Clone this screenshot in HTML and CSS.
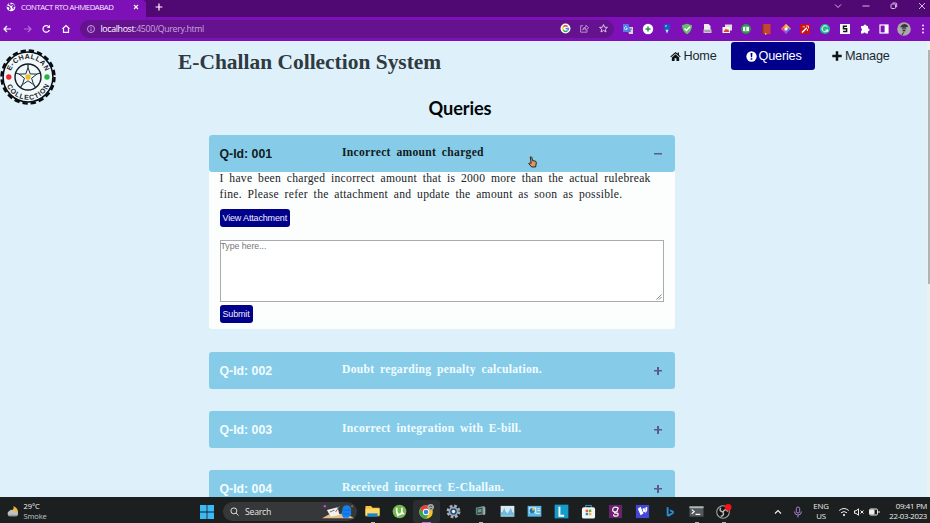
FILE: index.html
```
<!DOCTYPE html>
<html lang="en">
<head>
<meta charset="utf-8">
<title>CONTACT RTO AHMEDABAD</title>
<link rel="stylesheet" href="styles.css">
</head>
<body>
<div class="screen">
  <div class="tabs">
    <div class="tab">
      <svg class="globe" viewBox="0 0 12 12"><circle cx="6" cy="6" r="5.2" fill="#fff"/><path d="M1 5l3 1 1 2-1 2M5 1l-1 2 2 1 2-1 2 2-2 1 1 2" fill="none" stroke="#7812b4" stroke-width="1.5"/></svg>
      <span class="tab-title">CONTACT RTO AHMEDABAD</span>
      <svg class="tab-x" viewBox="0 0 6 6"><path d="M1 1l4 4M5 1L1 5" stroke="#fff" stroke-width="1.1"/></svg>
    </div>
    <svg class="tab-new" viewBox="0 0 8 8"><path d="M4 .6v6.800M.6 4h6.800" stroke="#fff" stroke-width="1.2"/></svg>
    <svg class="win" viewBox="0 0 100 12" fill="none" stroke="#d5bce0" stroke-width="1"><path d="M5 4.500l3 3 3-3M32.500 6h7M89 3l6 6M95 3l-6 6"/><rect x="61" y="4" width="4.500" height="4.500" rx="1"/><path d="M62.500 3h3.200q1 0 1 1v3.300"/></svg>
  </div>

  <div class="toolbar">
    <svg class="nav" viewBox="0 0 78 12" fill="none" stroke="#fff" stroke-width="1.2"><path d="M11 6H4M7 3L4 6l3 3"/><path d="M24 6h7M28 3l3 3-3 3" stroke="#b271d3"/><path d="M49 4A3.300 3.300 0 1 0 49.400 7"/><path d="M50 1.800v3.200h-3.200z" fill="#fff" stroke="none"/><path d="M62.500 5.700L66 2.600l3.500 3.100M63.500 5v4.400h5V5"/></svg>
    <div class="address">
      <svg class="info" viewBox="0 0 10 10" fill="none" stroke="#c9a2dd"><circle cx="5" cy="5" r="3.500"/><path d="M5 4.500V7M5 2.800v1"/></svg>
      <span class="url"><b>localhost</b>:4500/Qurery.html</span>
      <span class="address-icons">
        <svg viewBox="0 0 12 12"><circle cx="6" cy="6" r="5.400" fill="#fff"/><g fill="none" stroke-width="1.500"><path d="M3.700 4.100A3.200 3.200 0 0 1 8.300 3.800" stroke="#ea4335"/><path d="M3.700 4.100a3.300 3.300 0 0 0 0 3.800" stroke="#fbbc05"/><path d="M3.700 7.900a3.200 3.200 0 0 0 4.500.4" stroke="#34a853"/><path d="M8.200 8.300A3 3 0 0 0 9.200 6H6" stroke="#4285f4"/></g></svg>
        <svg viewBox="0 0 12 12" fill="none" stroke="#c49bd8"><path d="M4.500 3H1.800v7h7V8M4 7.500Q4.500 4.500 7.500 4.500V2.500L10.500 5.200 7.500 8V6.200Q5 6 4 7.500z"/></svg>
        <svg viewBox="0 0 12 12" fill="none" stroke="#e5cfee"><path d="M6 1.700l1.200 2.900 3.100.2-2.400 2 .8 3L6 8.200 3.300 9.800l.8-3-2.400-2 3.100-.2z"/></svg>
      </span>
    </div>
    <div class="extensions">
      <svg viewBox="0 0 12 12"><path d="M5 4h6v7H7z" fill="#d8d8dc"/><path d="M1 1h5.500l2 8H1z" fill="#4b82ea"/><path d="M4.800 4A1.500 1.500 0 1 0 5.300 5.500H4" fill="none" stroke="#fff" stroke-width=".8"/><path d="M7.500 6H10M9 5.500L8 9" stroke="#687080" stroke-width=".8"/></svg>
      <svg viewBox="0 0 12 12"><circle cx="6" cy="6" r="5.200" fill="#fff"/><path d="M6 3.500v5M3.500 6h5" stroke="#269653" stroke-width="1.500"/></svg>
      <svg viewBox="0 0 12 12"><path d="M2.500 3.500A3.500 2.700 0 0 1 9.500 3.500Q9.500 5.500 6 10.500 2.500 5.500 2.500 3.500z" fill="#175ac0"/><circle cx="5" cy="3" r="1.100" fill="#75b5f6"/><path d="M4.500 6.800h3L6 10.500z" fill="#d6e3f3"/></svg>
      <svg viewBox="0 0 12 12"><path d="M6 .7l5 1.600q0 6-5 9-5-3-5-9z" fill="#65c067"/><path d="M3.500 5.500L5.500 7.500 9 3.800" fill="none" stroke="#fff" stroke-width="1.500"/></svg>
      <svg viewBox="0 0 12 12"><path d="M3 1h4.500l2 2v7H3z" fill="#eee"/><path d="M2.500 6.500h8V10h-8z" fill="#cbc5d1"/><path d="M3.500 8h6" stroke="#857c8b"/></svg>
      <svg viewBox="0 0 12 12"><path d="M4 1.500h7v6H4z" fill="#ddd"/><path d="M1.500 4h7.500v6H1.500z" fill="#f8f5ee"/><path d="M3 8l2-2.500L6 7l1-1 1.500 3H2.500z" fill="#d24b38"/></svg>
      <svg viewBox="0 0 12 12"><circle cx="6" cy="6" r="5" fill="#2d9a48"/><rect x="3" y="3.800" width="6" height="4.400" rx=".7" fill="#fff"/><path d="M5.800 4v4" stroke="#2d9a48"/></svg>
      <svg viewBox="0 0 12 12"><path d="M2 1h8.500v10H2z" fill="#c64532"/><path d="M2 1h1.500v10H2z" fill="#853028"/><path d="M5 10h1.500v1.800H5z" fill="#e5b84f"/></svg>
      <svg viewBox="0 0 12 12"><path d="M6 .8L1 5.800l2 2L6 4.500z" fill="#f68a45"/><path d="M6 .8l5 5L8.500 8 5 4z" fill="#f2c14b"/><path d="M1 5.800L6 11l1-3-3-3z" fill="#e5418e"/><path d="M11 5.800L6 11 5 8l3.500-3z" fill="#5275e8"/><circle cx="6" cy="6" r="1.600" fill="#fff"/></svg>
      <svg viewBox="0 0 12 12"><path d="M1 1h10v10H1z" fill="#cb1118"/><path d="M3 9.500L7.800 4.700" stroke="#fff" stroke-width="1.600"/><path d="M3.500 3.800H6M8.500 6v2M7 3h2.500v2.500" fill="none" stroke="#fff" stroke-width=".8"/></svg>
      <svg viewBox="0 0 12 12"><circle cx="6" cy="6" r="5" fill="#20ba91"/><path d="M8.500 4A3 3 0 1 0 8.800 7H6.500M8.800 6.800v2" fill="none" stroke="#fff"/></svg>
      <svg viewBox="0 0 12 12"><path d="M1 1h10v10H1z" fill="#fff"/><path d="M8 3.300H4.500V5.800H7.600V8.600H4" fill="none" stroke="#151515" stroke-width="1.500"/></svg>
      <svg viewBox="0 0 12 12"><path d="M2 3h2.500a1.500 1.500 0 1 1 3 0H9v2.200a1.500 1.500 0 1 1 0 3V10.500H6.800a1.400 1.400 0 0 0-2.600 0H2V8a1.400 1.400 0 0 0 0-2.700z" fill="#fff"/></svg>
      <svg viewBox="0 0 12 12"><rect x="2" y="2" width="8" height="8" fill="none" stroke="#fff" stroke-width="1.200"/><path d="M6.600 2H10v8H6.600z" fill="#fff"/></svg>
      <svg class="avatar" viewBox="0 0 14 14"><circle cx="7" cy="7" r="6.800" fill="#aaa"/><path d="M3 5.200Q6-.2 10.500 3.200L11 5z" fill="#373737"/><path d="M4.500 5h5l-.5 4L7 11 5 9z" fill="#888"/><path d="M5 6h4M6 8.500h2M6.500 10.500L5 13" stroke="#222"/></svg>
      <svg viewBox="0 0 12 12" fill="#fff"><circle cx="5" cy="2.500" r=".9"/><circle cx="5" cy="6" r=".9"/><circle cx="5" cy="9.500" r=".9"/></svg>
    </div>
  </div>

  <div class="viewport">
    <main class="page">
      <header>
        <svg class="logo" viewBox="0 0 56 56">
          <defs><path id="top-arc" d="M9.800 28a18.200 18.200 0 0 1 36.400 0"/><path id="bottom-arc" d="M5.200 28a22.800 22.800 0 0 0 45.600 0"/></defs>
          <circle cx="28" cy="28" r="26.500" fill="none" stroke="#070b10" stroke-width="2.400" stroke-dasharray="5.400 2.925"/>
          <circle cx="28" cy="28" r="24.900" fill="#f0f8fc" stroke="#070b10" stroke-width="1.500"/>
          <circle cx="28" cy="28" r="13" fill="none" stroke="#141b21" stroke-width="1.400"/>
          <path d="M28 18.500l2.200 6.400 6.800.2-5.400 4.100 2 6.500-5.600-3.900-5.600 3.900 2-6.500-5.400-4.100 6.800-.2z" fill="none" stroke="#202a30" stroke-width="1"/>
          <path d="M28 18.500V15M37 25l3.500-1M33.600 35.500l2 3M22.400 35.500l-2 3M19 25l-3.500-1" fill="none" stroke="#202a30" stroke-width="1.300"/>
          <circle cx="28" cy="28" r="2.700" fill="#efbe26"/><circle cx="8.800" cy="28" r="2.700" fill="#f0262a"/><circle cx="47" cy="28" r="2.700" fill="#26b53a"/>
          <text class="logo-text"><textPath href="#top-arc" startOffset="6" textLength="45">E-CHALLAN</textPath></text>
          <text class="logo-text"><textPath href="#bottom-arc" startOffset="9" textLength="53.500">COLLECTION</textPath></text>
        </svg>
        <h1>E-Challan Collection System</h1>
        <nav>
          <a><svg class="i-home" viewBox="0 0 12 12" fill="#101314"><path d="M6 1L.3 6l.8.9L6 2.700l4.900 4.200.8-.9L9.800 4.300V1.500H8.300V3z"/><path d="M6 3.500L2 7v4h3V8h2v3h3V7z"/></svg>Home</a>
          <a class="active"><svg class="i-alert" viewBox="0 0 12 12"><circle cx="6" cy="6" r="5.600" fill="#fff"/><path d="M5 2.200h2l-.3 4.600H5.300zM5.100 7.900h1.800v1.700H5.100z" fill="#00008b"/></svg>Queries</a>
          <a><svg class="i-plus" viewBox="0 0 10 10"><path d="M5 .3v9.400M.3 5h9.400" stroke="#101314" stroke-width="2.500"/></svg>Manage</a>
        </nav>
      </header>
      <h2>Queries</h2>
      <section class="queries">
        <article class="open">
          <div class="bar"><strong>Q-Id: 001</strong><span class="subject">Incorrect amount charged</span><i class="toggle minus"></i></div>
          <div class="panel">
            <p>I have been charged incorrect amount that is 2000 more than the actual rulebreak<br>fine. Please refer the attachment and update the amount as soon as possible.</p>
            <button class="view">View Attachment</button>
            <div class="reply"><span>Type here...</span><svg viewBox="0 0 7 7"><path d="M.5 6.500l6-6M3.500 6.500l3-3" stroke="#666" stroke-width=".9"/></svg></div>
            <button class="submit">Submit</button>
          </div>
        </article>
        <article><div class="bar"><strong>Q-Id: 002</strong><span class="subject">Doubt regarding penalty calculation.</span><i class="toggle"></i></div></article>
        <article><div class="bar"><strong>Q-Id: 003</strong><span class="subject">Incorrect integration with E-bill.</span><i class="toggle"></i></div></article>
        <article><div class="bar"><strong>Q-Id: 004</strong><span class="subject">Received incorrect E-Challan.</span><i class="toggle"></i></div></article>
      </section>
    </main>
    <div class="scrollbar"><div class="thumb"></div></div>
  </div>

  <footer class="taskbar">
    <div class="weather"><svg viewBox="0 0 14 14"><path d="M8 1q5 2 5 7l-3 2-4-4q3-1 2-5z" fill="#f5b72e"/><path d="M3.500 12a3 3 0 0 1 0-5.500Q6 3.800 8.700 6.300 13 6.500 13 9.500 13 12 11 12z" fill="#bdc2be"/><path d="M2.500 11.200h9.500" stroke="#929b9b" stroke-width="1.500"/></svg><div>29°C<br><span>Smoke</span></div></div>
    <svg class="start" viewBox="0 0 14 14"><path d="M0 0h6.600v6.600H0zM7.400 0H14v6.600H7.400zM0 7.400h6.600V14H0zM7.400 7.400H14V14H7.400z" fill="#3bb9f4"/></svg>
    <div class="search">
      <svg class="magnifier" viewBox="0 0 10 10" fill="none" stroke="#eee"><circle cx="4.300" cy="4.300" r="3.300"/><path d="M6.800 6.800L9.500 9.500"/></svg><span>Search</span>
      <svg class="art" viewBox="0 0 34 16"><path d="M0 14.500l7-4 18-1 8 5z" fill="#e7bc88"/><path d="M5 6l11-3 2 8-9 2z" fill="#f1f1ed"/><path d="M8 8l5-2M14 8l4-6" stroke="#68707a"/><path d="M21 6q0-5 4.500-5T30 6v5l-3 3h-5l-2-4z" fill="#1580ed"/><path d="M22 6h7M22 10h6" stroke="#075ec2" stroke-width=".7"/><circle cx="3" cy="2" r="1.300" fill="#bd49d4"/><circle cx="31" cy="2" r="1" fill="#d45d35"/></svg>
    </div>
    <div class="apps">
      <span class="running"><svg viewBox="0 0 16 16"><path d="M.5 2h6l1.500 2h7.500v9H.5z" fill="#f8c23d"/><path d="M.5 5h15v7H.5z" fill="#ffd967"/><path d="M2.500 10h11v3.500h-11z" fill="#1786d5"/></svg></span>
      <span><svg viewBox="0 0 16 16"><circle cx="8" cy="8" r="7.300" fill="#72b94b"/><path d="M5 4v4q0 3 3 3 2.500 0 2.500-3V4M10.500 8q0 3 2.500 2M5.500 9l1 4" fill="none" stroke="#fff" stroke-width="1.800"/></svg></span>
      <span class="current"><svg viewBox="0 0 16 16"><circle cx="7.500" cy="8.500" r="7.200" fill="#f5c328"/><path d="M1.300 5A7.200 7.200 0 0 1 14 5.400H7.500L5 10z" fill="#e24436"/><path d="M1.300 5A7.200 7.200 0 0 0 7.500 15.700L10 11 5 10z" fill="#36a854"/><circle cx="7.500" cy="8.500" r="3.400" fill="#fff"/><circle cx="7.500" cy="8.500" r="2.500" fill="#397fe9"/><circle cx="12.500" cy="3.500" r="3.400" fill="#aaa"/><path d="M11 3q1.500-2 3 0M12 5h2" stroke="#444" fill="none"/></svg></span>
      <span><svg viewBox="0 0 16 16"><circle cx="8" cy="8" r="6" fill="none" stroke="#a6b1b9" stroke-width="2.800" stroke-dasharray="2.800 1.912"/><circle cx="8" cy="8" r="5.200" fill="#9aa9b3"/><circle cx="8" cy="8" r="3.500" fill="#234e7e"/><circle cx="8" cy="8" r="1.800" fill="#eee"/></svg></span>
      <span class="running"><svg viewBox="0 0 16 16"><path d="M3 4l8-2 2 1v8l-8 1-2-1z" fill="#77898a"/><path d="M4 5l6-1v6l-6 1z" fill="#38524d"/><path d="M5 6l4-.8v3L5 9z" fill="#62a494"/><path d="M11 3l2 1v7l-2 1z" fill="#a6adac"/></svg></span>
      <span><svg viewBox="0 0 16 16"><path d="M.7 2h14.600v11.500H.7z" fill="#d9eaf2"/><path d="M1 12.500V9l2-1 1.500-4L6 8l2 2 2-3 1.500-3L13 8l2 2v2.500z" fill="#72b9df"/></svg></span>
      <span><svg viewBox="0 0 16 16"><path d="M.7 2h14.600v11.500H.7z" fill="#5db8e3"/><path d="M2 3.500h8v6H2z" fill="#c9eafa"/><circle cx="5.500" cy="7" r="2.800" fill="#1678b9"/><path d="M5.500 7V4A3 3 0 0 1 8.500 7z" fill="#f2b535"/><path d="M9 10h5M11 5h3M11 7h3" stroke="#e4f4fc"/></svg></span>
      <span><svg viewBox="0 0 16 16"><path d="M.7.700h14.600v14.600H.7z" fill="#159dc9"/><path d="M5.800 3v9.500h5" fill="none" stroke="#fff" stroke-width="2"/></svg></span>
      <span><svg viewBox="0 0 16 16"><path d="M5 4V1.500h6V4" fill="none" stroke="#35a8dd"/><rect x="1" y="3.500" width="14" height="12" rx="2" fill="#f4f5f5"/><path d="M5 6h2.600v2.600H5z" fill="#ed5531"/><path d="M8.400 6H11v2.600H8.400z" fill="#68ad31"/><path d="M5 9.400h2.600V12H5z" fill="#238bd2"/><path d="M8.400 9.400H11V12H8.400z" fill="#eeb52d"/></svg></span>
      <span><svg viewBox="0 0 16 16"><path d="M1 1h14v14H1z" fill="#6b216d"/><path d="M11 4Q5.500 2 5 6 5 9.500 9.500 8L11 4M6.500 9.500l4 .5q1 3-2 3-3 0-2.500-2" fill="none" stroke="#fff" stroke-width="1.300"/></svg></span>
      <span><svg viewBox="0 0 16 16"><path d="M1 1h14v14H1z" fill="#4545d6"/><path d="M3 5l3-2 3 7-3 2zM8 5l2-1 1 4-2 1zM11 4l2-1v4l-2 3z" fill="#fff"/></svg></span>
      <span><svg viewBox="0 0 16 16"><path d="M5 3l2 .8v7L11 9 8.500 7.800 8 5.500l4.500 2v2.700L7 13.500l-2-1.200z" fill="#278edb"/></svg></span>
      <span class="running"><svg viewBox="0 0 16 16"><path d="M.5 2.500h15v11H.5z" fill="#53585b"/><path d="M.5 2.500h15v2H.5z" fill="#b2b7ba"/><path d="M3 6l2.500 2L3 10.500M7 11h5" fill="none" stroke="#fff" stroke-width="1.300"/></svg></span>
      <span class="running"><svg viewBox="0 0 16 16"><circle cx="7.500" cy="8.500" r="6.700" fill="#151515" stroke="#aaa" stroke-width="1.100"/><path d="M7.500 8.500Q3 8 5 4M7.500 8.500Q10 4 12.500 8M7.500 8.500Q9 13 5 13" fill="none" stroke="#bbb" stroke-width="1.600"/><circle cx="13" cy="3.500" r="3.500" fill="#fc1018"/></svg></span>
    </div>
    <div class="tray">
      <svg class="tray-up" viewBox="0 0 8 8"><path d="M1 5.500l3-3 3 3" fill="none" stroke="#eee" stroke-width="1.200"/></svg>
      <svg class="mic" viewBox="0 0 10 12" fill="none" stroke="#ab80d2"><rect x="3.300" y="1" width="3.400" height="6" rx="1.700"/><path d="M1.500 5.500q0 3.500 3.500 3.500t3.500-3.500M5 9v2.500"/></svg>
      <div class="language">ENG<br>US</div>
      <svg class="status" viewBox="0 0 42 12" fill="none" stroke="#eee"><path d="M1.200 4.500q4.800-4 9.600 0M3 6.800q3-2.500 6 0"/><circle cx="6" cy="9" r=".7" fill="#eee"/><path d="M16.500 4.800h1.500l2.500-2v6.500L18 7.300h-1.500zM22.500 4.500l3 3M25.500 4.500l-3 3"/><rect x="31.500" y="3" width="8" height="6" rx="1.200"/><path d="M32.500 4h3.500v4h-3.500z" fill="#eee"/><path d="M41 5v2"/></svg>
      <div class="clock"><span>09:41 PM</span><span>22-03-2023</span></div>
    </div>
  </footer>
  <svg class="cursor" viewBox="0 0 10 13"><path d="M2.500 1q1.300-1 1.800.5L5 5l3 .5q1.500.5 1.200 2L8.500 12H4L.8 8.200q.2-1 1.700-.4L3.500 8z" fill="#dc995b" stroke="#1b1918" stroke-width="1"/></svg>
</div>
</body>
</html>
```
FILE: styles.css
```
* { box-sizing: border-box; }
body { margin: 0; overflow: hidden; background: #dff1fb; }
svg { display: block; flex: none; overflow: visible; }
.screen { position: relative; width: 930px; height: 523px; display: flex; flex-direction: column; overflow: hidden; font-family: "Open Sans", sans-serif; }

.tabs { height: 17px; flex: none; display: flex; align-items: flex-start; background: #500873; }
.tab { width: 146px; height: 17px; display: flex; align-items: center; padding: 0 7px 3px 6px; background: #7e10b8; border-top-right-radius: 4px; }
.globe { width: 10px; height: 10px; margin-right: 5px; }
.tab-title { flex: 1; font-size: 7.800px; line-height: 12px; letter-spacing: -.49px; color: #f8eaff; white-space: nowrap; }
.tab-x { width: 6px; height: 6px; }
.tab-new { width: 8px; height: 8px; margin: 3px 0 0 9px; }
.win { width: 100px; height: 12px; margin-left: auto; }
.toolbar { height: 23.500px; flex: none; display: flex; align-items: center; background: #7e10b8; }
.nav { width: 78px; height: 12px; }
.address { width: 534px; height: 18px; margin-left: 2px; display: flex; align-items: center; border-radius: 9px; background: #65128f; }
.info { width: 10px; height: 10px; margin: 0 4.500px 0 6px; }
.url { font-size: 8.800px; line-height: 14px; letter-spacing: -.35px; color: #c9a5db; white-space: nowrap; }
.url b { color: #fff; font-weight: 400; }
.address-icons { display: flex; gap: 8px; margin: 0 5px 0 auto; }
.address-icons svg { width: 11px; height: 11px; }
.extensions { width: 308px; margin-left: 8px; display: flex; align-items: center; justify-content: space-between; }
.extensions svg { width: 12px; height: 12px; }
.extensions .avatar { width: 14px; height: 14px; margin: 0 -1px; }

.viewport { height: 456.500px; flex: none; display: flex; overflow: hidden; background: #def1fb; }
.page { width: 927px; }
.scrollbar { width: 3px; padding: 9px 0 0 1px; background: #edf0f2; }
.thumb { height: 234px; background: #afb3b6; }
header { height: 67px; display: flex; align-items: flex-start; }
.logo { width: 56px; height: 56px; margin-top: 8px; }
.logo-text { font: 700 7px "Liberation Sans", sans-serif; fill: #182027; }
h1 { width: 270px; margin: 7px 0 0 122px; font: 700 21.450px/28px "Liberation Serif", serif; color: #2e3a3f; white-space: nowrap; }
header nav { margin-left: 205px; display: flex; }
header nav a { height: 28px; margin-top: 1.500px; display: flex; align-items: center; font: 12.700px/28px "Liberation Sans", sans-serif; letter-spacing: -.2px; color: #1d282d; }
header nav a:first-child { width: 78px; padding-left: 17px; }
header nav a.active { width: 83.500px; padding-left: 14.500px; color: #fff; background: #00008b; border-radius: 3px; }
header nav a:last-child { padding-left: 17.500px; }
.i-home { width: 11px; height: 11px; margin-right: 2.500px; }
.i-alert { width: 11px; height: 11px; margin-right: 2px; }
.i-plus { width: 10px; height: 10px; margin-right: 3px; }
h2 { height: 27px; margin: 0; padding-left: 428.500px; font: 700 18.200px/1px Lato, sans-serif; letter-spacing: -.1px; color: #030607; }
.queries { width: 466px; margin-left: 208.500px; }
article { margin-bottom: 22px; border-radius: 3px; }
article.open { margin-bottom: 22.500px; background: #fcfefe; }
.bar { height: 37px; display: flex; align-items: flex-start; padding: 0 12px 0 11px; background: #86cce9; border-radius: 3px; color: #f2fcff; }
.open .bar { color: #101a20; }
.bar strong { width: 122.500px; font: 700 12.300px/39px "Liberation Sans", sans-serif; }
.subject { flex: 1; font: 700 11.600px/36px "Liberation Serif", serif; letter-spacing: .29px; word-spacing: 2.500px; white-space: nowrap; }
.toggle { width: 9px; height: 9px; margin-top: 15px; background: linear-gradient(#5d5793, #5d5793) center / 8px 1.500px no-repeat, linear-gradient(#5d5793, #5d5793) center / 2px 8px no-repeat; }
.toggle.minus { background: linear-gradient(#5d5793, #5d5793) center / 8px 1.500px no-repeat; }
.panel { height: 157.500px; padding: 0 11px; display: flex; flex-direction: column; align-items: flex-start; }
.panel p { margin: -.5px 0 0; font: 11.600px/16px "Liberation Serif", serif; letter-spacing: .29px; word-spacing: 2.500px; color: #202328; white-space: nowrap; }
button { border: 0; border-radius: 3px; padding: 0; background: #00008b; color: #eef; font: 9px/18px "Liberation Sans", sans-serif; letter-spacing: -.16px; white-space: nowrap; }
.view { width: 70.500px; height: 18px; margin-top: 5.500px; }
.reply { width: 444px; height: 62px; margin-top: 13px; padding: 0 1px 1px 0; display: flex; justify-content: space-between; border: 1px solid #a8abb0; background: #fff; font: 8.800px/11px "Liberation Sans", sans-serif; letter-spacing: -.05px; color: #777; }
.reply svg { width: 6px; height: 6px; align-self: flex-end; }
.submit { width: 33px; height: 18px; margin-top: 3px; }

.taskbar { height: 26px; flex: none; display: flex; align-items: center; padding-top: 3px; background: #1c1f20; color: #f3f3f3; white-space: nowrap; }
.weather { width: 200px; padding-left: 6px; display: flex; align-items: center; font-size: 7.500px; line-height: 9.700px; letter-spacing: -.1px; }
.weather svg { width: 13px; height: 13px; margin-right: 4.500px; }
.weather span { color: #c3c5c7; }
.start { width: 14px; height: 14px; }
.search { width: 134px; height: 19px; margin-left: 9px; display: flex; align-items: center; border-radius: 10px; background: #353739; font-size: 8.700px; letter-spacing: -.25px; color: #e6e6e6; }
.magnifier { width: 9px; height: 9px; margin: 0 6px 0 7px; }
.art { width: 33px; height: 16px; margin: 0 2px 0 auto; }
.apps { display: flex; margin-left: 1.500px; }
.apps > span { width: 27px; height: 23px; display: flex; align-items: center; justify-content: center; position: relative; }
.apps svg { width: 15px; height: 15px; }
.running::after, .current::after { content: ""; position: absolute; left: 12px; bottom: 0; width: 4px; height: 1px; background: #b5b5b5; }
.apps .current { background: #2b2e30; border-radius: 3px; }
.current::after { left: 9px; width: 9px; background: #b078dc; }
.tray { width: 157px; margin-left: auto; padding-right: 3px; display: flex; align-items: center; font-size: 7.800px; line-height: 9.500px; color: #eee; }
.tray-up { width: 8px; height: 8px; margin-left: 1px; }
.mic { width: 10px; height: 12px; margin-left: 11px; }
.language { width: 20px; margin-left: 8px; text-align: center; letter-spacing: -.2px; }
.status { width: 42px; height: 12px; margin-left: 7px; }
.clock { display: flex; flex-direction: column; margin-left: auto; text-align: right; letter-spacing: -.3px; }
.cursor { position: absolute; left: 528px; top: 156px; width: 9px; height: 12px; }
```
